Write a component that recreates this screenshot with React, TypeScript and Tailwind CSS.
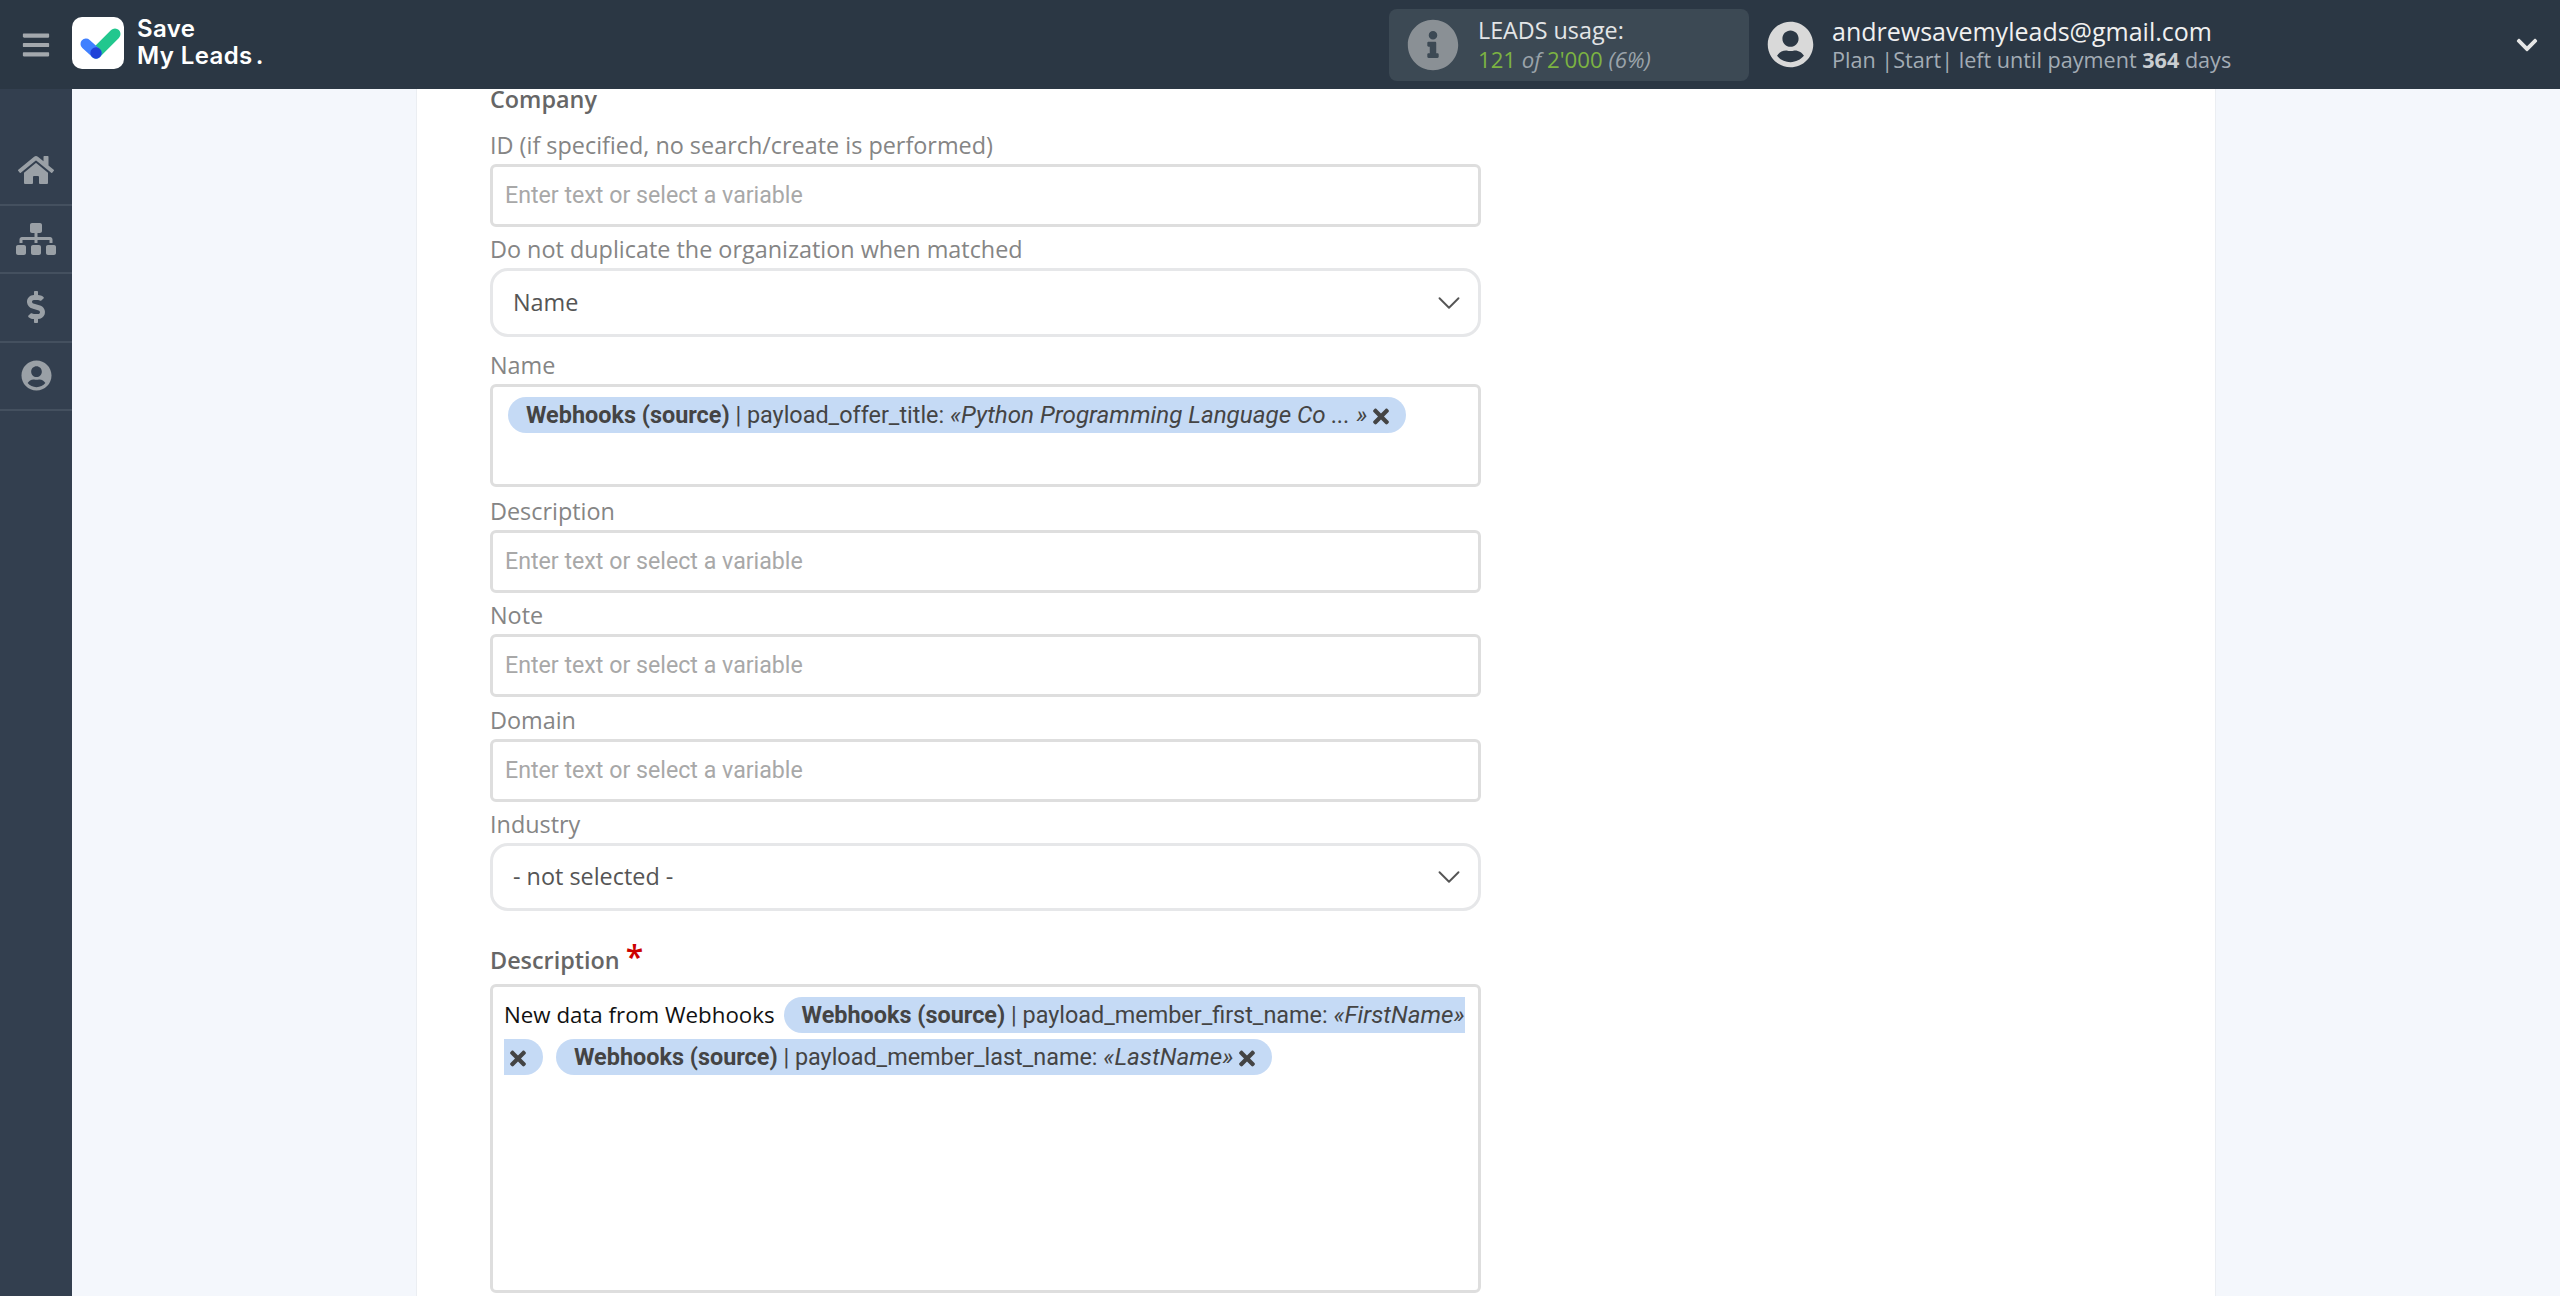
import { FaHome, FaSitemap, FaDollarSign, FaUserCircle, FaInfoCircle, FaChevronDown, FaBars, FaTimes } from "react-icons/fa";
import { ChevronDown } from "lucide-react";
import type { ReactNode } from "react";

function Label({ children, className = "mt-[10px]" }: { children: ReactNode; className?: string }) {
  return <div className={`h-[28px] leading-[25px] text-[23.4px] text-[#858585] ${className}`}>{children}</div>;
}

function TextInput() {
  return (
    <input
      readOnly
      placeholder="Enter text or select a variable"
      className="block w-[991px] h-[63px] mt-[3px] rounded-[6px] border-[3px] border-[#dedede] bg-white pl-[12px] pb-[1px] text-[23.2px] text-[#555] outline-none placeholder:text-[#a8a8a8] font-['Roboto',sans-serif]"
    />
  );
}

function Select({ value, className = "h-[69px]" }: { value: string; className?: string }) {
  return (
    <div className={`flex items-center justify-between w-[991px] mt-[3px] rounded-[18px] border-[3px] border-[#e6e7e9] bg-white pl-[20px] pr-[10px] text-[23.4px] text-[#555] ${className}`}>
      <span>{value}</span>
      <ChevronDown className="w-[38px] h-[38px] text-[#555] stroke-[1.2]" />
    </div>
  );
}

function Chip({ children }: { children: ReactNode }) {
  return (
    <span className="bg-[#c5daf5] rounded-[18px] pl-[18px] pr-[17px] py-[4px] text-[#444] text-[23.4px] font-['Roboto',sans-serif]">
      {children}
    </span>
  );
}

function Val({ children }: { children: ReactNode }) {
  return <i className="text-[24.2px]">{children}</i>;
}

function X() {
  return <FaTimes className="inline-block w-[16px] h-[23px] ml-[6px] align-[-5px] text-[#444]" />;
}

function NavItem({ children }: { children: ReactNode }) {
  return (
    <div className="flex items-center justify-center h-[68.5px] border-b-2 border-[#44505f] text-[#9aa0a6]">
      {children}
    </div>
  );
}

export default function App() {
  return (
    <div className="flex flex-col h-screen overflow-hidden bg-[#f4f7fc] font-['Open_Sans',sans-serif]">
      <header className="flex items-center h-[89px] shrink-0 bg-[#2b3744]">
        <div className="flex items-center justify-center w-[72px]">
          <FaBars className="w-[30px] h-[30px] text-[#a3a8ad]" />
        </div>
        <div className="flex items-center justify-center w-[52px] h-[52px] rounded-[10px] bg-white mb-[3px]">
          <svg viewBox="0 0 52 52" className="w-[52px] h-[52px]">
            <path d="M24 36 L43 17" stroke="#22c78e" strokeWidth="11" strokeLinecap="round" />
            <path d="M14 27 L24 36" stroke="#4080ff" strokeWidth="11" strokeLinecap="round" />
            <circle cx="24" cy="36" r="5.7" fill="#2043d8" />
          </svg>
        </div>
        <div className="ml-[13px] mb-[5px] text-white text-[24px] font-semibold leading-[27px] tracking-[0.4px] font-['Inter',sans-serif]">
          <div>Save</div>
          <div>My Leads<span className="ml-[3px]">.</span></div>
        </div>

        <div className="ml-auto flex items-center w-[360px] h-[72px] rounded-[8px] bg-[#3c4954] pl-[18px]">
          <FaInfoCircle className="w-[52px] h-[52px] text-[#8a9095]" />
          <div className="ml-[19px] leading-[29px]">
            <div className="text-[23.3px] text-[#e3e5e7]">LEADS usage:</div>
            <div className="text-[22.2px] italic text-[#9aa3aa]">
              <span className="not-italic text-[#7cb342]">121</span> of <span className="not-italic text-[#7cb342]">2'000</span> (6%)
            </div>
          </div>
        </div>
        <FaUserCircle className="ml-[18px] w-[47px] h-[47px] text-[#d9d9d9]" />
        <div className="ml-[18px] w-[683px]">
          <div className="text-[25px] leading-[30px] text-[#f0f0f0]">andrewsavemyleads@gmail.com</div>
          <div className="text-[21.6px] leading-[27px] text-[#a3acb5]">
            Plan |Start| left until payment <b className="text-[#c9cdd1]">364</b> days
          </div>
        </div>
        <FaChevronDown className="mr-[21px] w-[24px] h-[24px] text-[#e5e5e5]" />
      </header>

      <div className="flex flex-1 min-h-0">
        <aside className="w-[72px] shrink-0 bg-[#333f4f] pt-[48px]">
          <NavItem><FaHome className="w-[36px] h-[32px]" /></NavItem>
          <NavItem><FaSitemap className="w-[40px] h-[32px]" /></NavItem>
          <NavItem><FaDollarSign className="w-[20px] h-[32px]" /></NavItem>
          <NavItem><FaUserCircle className="w-[31px] h-[31px]" /></NavItem>
        </aside>

        <main className="flex-1 min-w-0 pl-[344px]">
          <div className="w-[1800px] h-full bg-white border-x border-[#ebeef2] pl-[73px] text-[#858585]">
            <div className="h-[20px] leading-[20px] text-[23.4px] font-semibold text-[#666]">Company</div>
            <Label className="mt-[24px]">ID (if specified, no search/create is performed)</Label>
            <TextInput />
            <Label>Do not duplicate the organization when matched</Label>
            <Select value="Name" />
            <Label className="mt-[16px]">Name</Label>
            <div className="w-[991px] h-[103px] mt-[3px] rounded-[6px] border-[3px] border-[#dedede] bg-white pl-[15px] pt-[12px] leading-[32px]">
              <Chip>
                <b>Webhooks (source)</b> | payload_offer_title: <Val>«Python Programming Language Co ... »</Val>
                <X />
              </Chip>
            </div>
            <Label className="mt-[12px]">Description</Label>
            <TextInput />
            <Label>Note</Label>
            <TextInput />
            <Label className="mt-[11px]">Domain</Label>
            <TextInput />
            <Label>Industry</Label>
            <Select value="- not selected -" className="h-[68px]" />
            <div className="mt-[35px] h-[28px] leading-[28px] text-[23.4px] font-semibold text-[#666]">
              Description <span className="text-[#c00] text-[32px] leading-[20px]">*</span>
            </div>
            <div className="w-[991px] h-[309px] mt-[10px] rounded-[6px] border-[3px] border-[#dedede] bg-white pl-[11px] pt-[8px] leading-[40px]">
              <span className="text-[22.3px] text-[#111] mr-[9px]">New data from Webhooks</span>
              <Chip>
                <b>Webhooks (source)</b> | payload_member_first_name: <Val>«FirstName»</Val>
                <br />
                <X />
              </Chip>
              <span className="ml-[13px]" />
              <Chip>
                <b>Webhooks (source)</b> | payload_member_last_name: <Val>«LastName»</Val>
                <X />
              </Chip>
            </div>
          </div>
        </main>
      </div>
    </div>
  );
}
